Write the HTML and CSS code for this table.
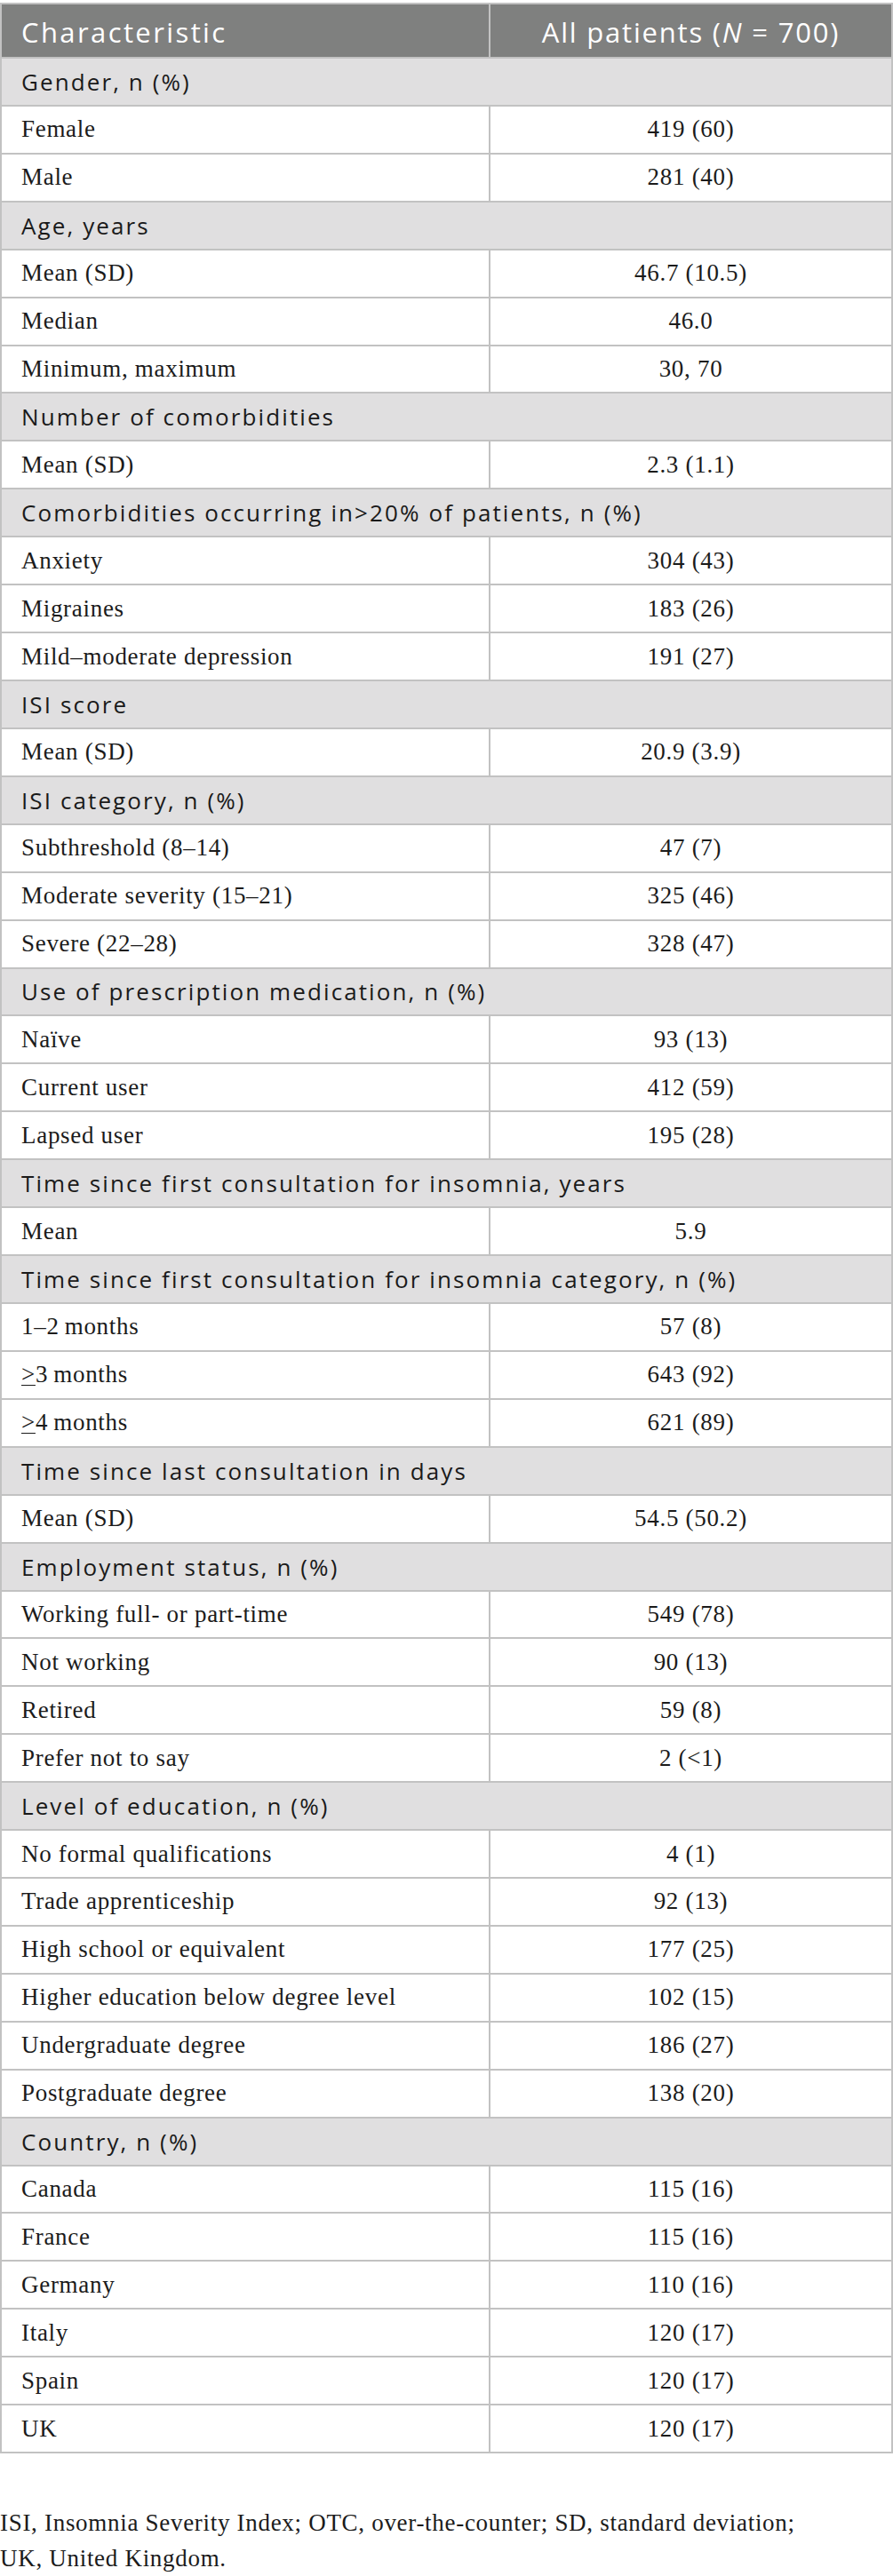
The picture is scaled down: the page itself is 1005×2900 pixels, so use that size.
FILE: index.html
```html
<!DOCTYPE html>
<html lang="en">
<head>
<meta charset="utf-8">
<title>Baseline characteristics</title>
<link rel="stylesheet" href="styles.css">
</head>
<body>
<div class="page">
<table class="tbl">
  <thead>
    <tr class="head">
      <th class="c1">Characteristic</th>
      <th class="c2">All patients (<i>N</i> = 700)</th>
    </tr>
  </thead>
  <tbody>
    <tr class="sec"><td colspan="2">Gender, n (%)</td></tr>
    <tr><td class="c1">Female</td><td class="c2">419 (60)</td></tr>
    <tr><td class="c1">Male</td><td class="c2">281 (40)</td></tr>
    <tr class="sec"><td colspan="2">Age, years</td></tr>
    <tr><td class="c1">Mean (SD)</td><td class="c2">46.7 (10.5)</td></tr>
    <tr><td class="c1">Median</td><td class="c2">46.0</td></tr>
    <tr><td class="c1">Minimum, maximum</td><td class="c2">30, 70</td></tr>
    <tr class="sec"><td colspan="2">Number of comorbidities</td></tr>
    <tr><td class="c1">Mean (SD)</td><td class="c2">2.3 (1.1)</td></tr>
    <tr class="sec"><td colspan="2">Comorbidities occurring in&gt;20% of patients, n (%)</td></tr>
    <tr><td class="c1">Anxiety</td><td class="c2">304 (43)</td></tr>
    <tr><td class="c1">Migraines</td><td class="c2">183 (26)</td></tr>
    <tr><td class="c1">Mild–moderate depression</td><td class="c2">191 (27)</td></tr>
    <tr class="sec"><td colspan="2">ISI score</td></tr>
    <tr><td class="c1">Mean (SD)</td><td class="c2">20.9 (3.9)</td></tr>
    <tr class="sec"><td colspan="2">ISI category, n (%)</td></tr>
    <tr><td class="c1">Subthreshold (8–14)</td><td class="c2">47 (7)</td></tr>
    <tr><td class="c1">Moderate severity (15–21)</td><td class="c2">325 (46)</td></tr>
    <tr><td class="c1">Severe (22–28)</td><td class="c2">328 (47)</td></tr>
    <tr class="sec"><td colspan="2">Use of prescription medication, n (%)</td></tr>
    <tr><td class="c1">Naïve</td><td class="c2">93 (13)</td></tr>
    <tr><td class="c1">Current user</td><td class="c2">412 (59)</td></tr>
    <tr><td class="c1">Lapsed user</td><td class="c2">195 (28)</td></tr>
    <tr class="sec"><td colspan="2">Time since first consultation for insomnia, years</td></tr>
    <tr><td class="c1">Mean</td><td class="c2">5.9</td></tr>
    <tr class="sec"><td colspan="2">Time since first consultation for insomnia category, n (%)</td></tr>
    <tr><td class="c1">1–2&thinsp;months</td><td class="c2">57 (8)</td></tr>
    <tr><td class="c1"><u>&gt;</u>3&thinsp;months</td><td class="c2">643 (92)</td></tr>
    <tr><td class="c1"><u>&gt;</u>4&thinsp;months</td><td class="c2">621 (89)</td></tr>
    <tr class="sec"><td colspan="2">Time since last consultation in days</td></tr>
    <tr><td class="c1">Mean (SD)</td><td class="c2">54.5 (50.2)</td></tr>
    <tr class="sec"><td colspan="2">Employment status, n (%)</td></tr>
    <tr><td class="c1">Working full- or part-time</td><td class="c2">549 (78)</td></tr>
    <tr><td class="c1">Not working</td><td class="c2">90 (13)</td></tr>
    <tr><td class="c1">Retired</td><td class="c2">59 (8)</td></tr>
    <tr><td class="c1">Prefer not to say</td><td class="c2">2 (&lt;1)</td></tr>
    <tr class="sec"><td colspan="2">Level of education, n (%)</td></tr>
    <tr><td class="c1">No formal qualifications</td><td class="c2">4 (1)</td></tr>
    <tr><td class="c1">Trade apprenticeship</td><td class="c2">92 (13)</td></tr>
    <tr><td class="c1">High school or equivalent</td><td class="c2">177 (25)</td></tr>
    <tr><td class="c1">Higher education below degree level</td><td class="c2">102 (15)</td></tr>
    <tr><td class="c1">Undergraduate degree</td><td class="c2">186 (27)</td></tr>
    <tr><td class="c1">Postgraduate degree</td><td class="c2">138 (20)</td></tr>
    <tr class="sec"><td colspan="2">Country, n (%)</td></tr>
    <tr><td class="c1">Canada</td><td class="c2">115 (16)</td></tr>
    <tr><td class="c1">France</td><td class="c2">115 (16)</td></tr>
    <tr><td class="c1">Germany</td><td class="c2">110 (16)</td></tr>
    <tr><td class="c1">Italy</td><td class="c2">120 (17)</td></tr>
    <tr><td class="c1">Spain</td><td class="c2">120 (17)</td></tr>
    <tr><td class="c1">UK</td><td class="c2">120 (17)</td></tr>
  </tbody>
</table>
<p class="note">ISI, Insomnia Severity Index; OTC, over-the-counter; SD, standard deviation;<br>UK, United Kingdom.</p>
</div>
</body>
</html>
```

FILE: styles.css
```css
html, body {
  margin: 0;
  padding: 0;
  background: #ffffff;
}

.page {
  padding-top: 3px;
  width: 1005px;
}

.tbl {
  width: 1005px;
  border-collapse: collapse;
  table-layout: fixed;
  font-family: "Liberation Serif", "Times New Roman", serif;
  font-size: 27px;
  letter-spacing: 0.7px;
  color: #1b1b1b;
}

.tbl td, .tbl th {
  border: 2px solid #c2c2c2;
  padding: 0 22px;
  vertical-align: middle;
}

.tbl tr {
  height: 53.93px;
}

.tbl .c1 {
  width: 504px;
  text-align: left;
}

.tbl .c2 {
  text-align: center;
}

.tbl .head {
  height: 61px;
}

.tbl .head th {
  background: #7f807f;
  color: #ffffff;
  font-family: "Open Sans", "Noto Sans", sans-serif;
  font-weight: 400;
  font-size: 31px;
  letter-spacing: 2.4px;
  padding-top: 3px;
}

.tbl .head th.c2 {
  letter-spacing: 1.8px;
}

.tbl .sec td {
  background: #e0dfe0;
  font-family: "Open Sans", "Noto Sans", sans-serif;
  font-size: 26px;
  letter-spacing: 2.1px;
  color: #1a1a1a;
}

.tbl u {
  text-decoration-thickness: 1px;
  text-underline-offset: 3px;
}

.note {
  margin: 58px 0 0 0;
  font-family: "Liberation Serif", "Times New Roman", serif;
  font-size: 27px;
  letter-spacing: 0.7px;
  line-height: 40px;
  color: #1b1b1b;
}
```
